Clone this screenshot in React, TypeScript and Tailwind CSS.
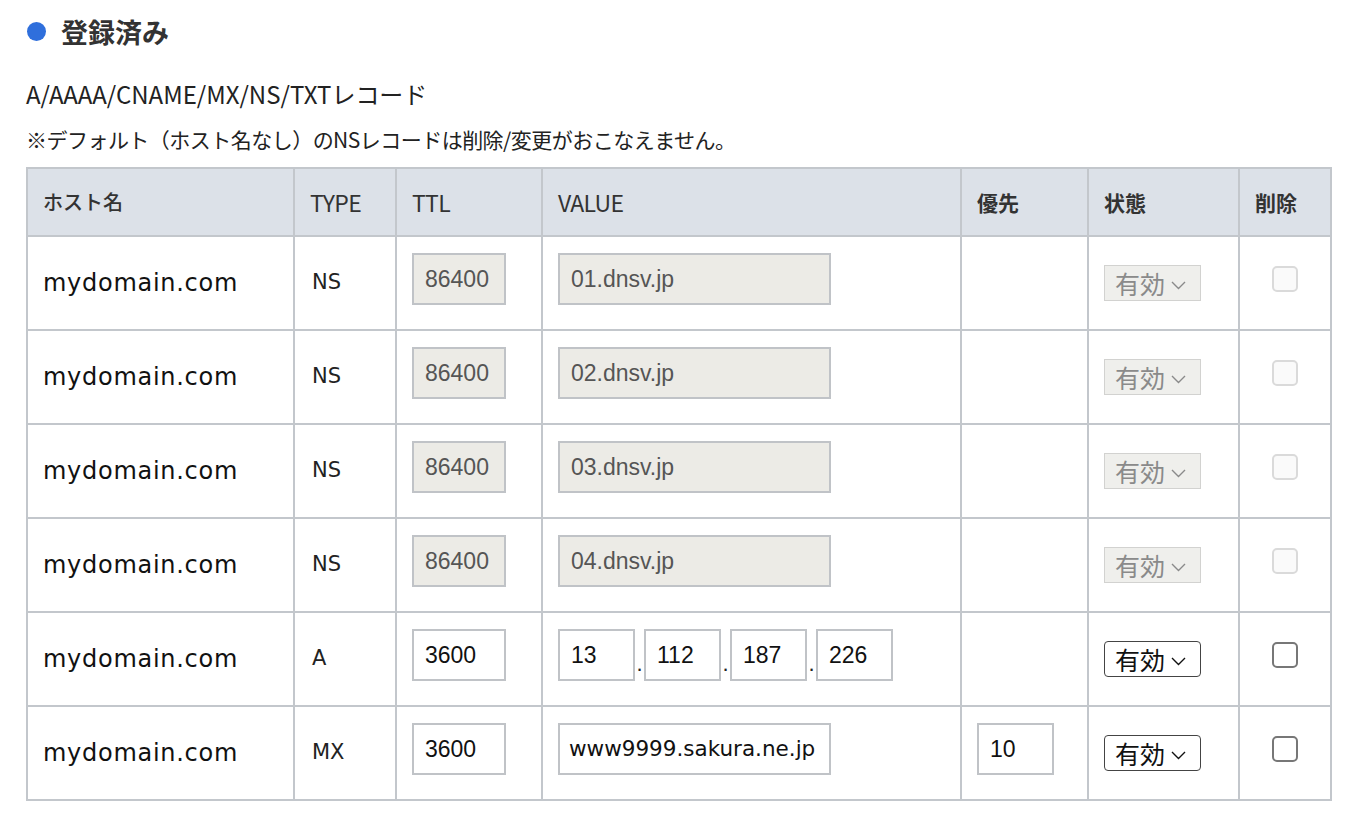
interface DnsRecord {
  host: string;
  type: string;
  ttl: string;
  value: string[];
  priority?: string;
  locked: boolean;
}

const records: DnsRecord[] = [
  { host: 'mydomain.com', type: 'NS', ttl: '86400', value: ['01.dnsv.jp'], locked: true },
  { host: 'mydomain.com', type: 'NS', ttl: '86400', value: ['02.dnsv.jp'], locked: true },
  { host: 'mydomain.com', type: 'NS', ttl: '86400', value: ['03.dnsv.jp'], locked: true },
  { host: 'mydomain.com', type: 'NS', ttl: '86400', value: ['04.dnsv.jp'], locked: true },
  { host: 'mydomain.com', type: 'A', ttl: '3600', value: ['13', '112', '187', '226'], locked: false },
  {
    host: 'mydomain.com',
    type: 'MX',
    ttl: '3600',
    value: ['www9999.sakura.ne.jp'],
    priority: '10',
    locked: false,
  },
];

const jp = "font-['Noto_Sans_CJK_JP',sans-serif]";
const verdana = "font-['DejaVu_Sans',sans-serif]";
const cell = 'border-2 border-[#c3c7cc] px-[15px] align-middle';

function TextBox({
  value,
  width,
  locked,
  wide = false,
}: {
  value: string;
  width: string;
  locked: boolean;
  wide?: boolean;
}) {
  return (
    <div
      className={`${width} h-[52px] mb-2 flex items-center border-2 border-[#c0c3c7] ${
        wide
          ? `${verdana} text-[21.5px] pl-[9px]`
          : "font-['Liberation_Sans',sans-serif] text-[23px] pl-[11px]"
      } ${locked ? 'bg-[#ecebe6] text-[#555]' : 'bg-white text-[#111]'}`}
    >
      {value}
    </div>
  );
}

function Chevron() {
  return (
    <svg width="15" height="9" viewBox="0 0 15 9" fill="none" className="mt-[4px]">
      <polyline points="1,1 7.5,7.5 14,1" stroke="currentColor" strokeWidth="1.4" />
    </svg>
  );
}

function StatusSelect({ locked }: { locked: boolean }) {
  return (
    <div
      className={`w-[97px] h-[36px] flex items-center pl-[10px] gap-[6px] ${jp} text-[25px] leading-none ${
        locked
          ? 'bg-[#efefec] border border-[#d2d2d0] text-[#8a8a8a]'
          : 'bg-white border border-[#444] rounded-[4px] text-[#111]'
      }`}
    >
      <span>有効</span>
      <Chevron />
    </div>
  );
}

function DeleteBox({ locked }: { locked: boolean }) {
  return (
    <div className="flex justify-center mb-2">
      <div
        className={`w-[26px] h-[26px] rounded-[5px] ${
          locked ? 'border-2 border-[#dadada] bg-[#fafafa]' : 'border-2 border-[#777] bg-white'
        }`}
      />
    </div>
  );
}

export default function App() {
  return (
    <div className={`min-h-screen bg-white pl-[26px] pt-[18px] ${jp} text-[#222]`}>
      <div className="flex items-center gap-[15px]">
        <span className="w-[19px] h-[19px] rounded-full bg-[#2f6fdc] ml-[1px]" />
        <h2 className="text-[27px] leading-none font-bold text-[#333]">登録済み</h2>
      </div>

      <p className="mt-[37px] text-[24px] leading-none text-[#222]">
        A/AAAA/CNAME/MX/NS/TXTレコード
      </p>
      <p className="mt-[23px] text-[21px] leading-none text-[#222] tracking-[-0.025em]">
        ※デフォルト（ホスト名なし）のNSレコードは削除/変更がおこなえません。
      </p>

      <table className="mt-[17px] w-[1304px] table-fixed border-collapse">
        <colgroup>
          <col className="w-[267px]" />
          <col className="w-[102px]" />
          <col className="w-[146px]" />
          <col className="w-[419px]" />
          <col className="w-[127px]" />
          <col className="w-[151px]" />
          <col className="w-[92px]" />
        </colgroup>
        <thead>
          <tr className="bg-[#dce1e8] h-[68px] text-left text-[#333] leading-none">
            <th className={`${cell} font-medium text-[20px]`}>ホスト名</th>
            <th className={`${cell} font-normal text-[23px] tracking-[-0.03em]`}>TYPE</th>
            <th className={`${cell} font-normal text-[23px] tracking-[-0.03em]`}>TTL</th>
            <th className={`${cell} font-normal text-[23px] tracking-[-0.03em]`}>VALUE</th>
            <th className={`${cell} font-bold text-[21px]`}>優先</th>
            <th className={`${cell} font-bold text-[21px]`}>状態</th>
            <th className={`${cell} font-bold text-[21px]`}>削除</th>
          </tr>
        </thead>
        <tbody>
          {records.map((r, i) => (
            <tr key={i} className="h-[94px]">
              <td className={`${cell} ${verdana} text-[24px] tracking-[0.03em] text-[#111]`}>
                {r.host}
              </td>
              <td className={`${cell} ${verdana} text-[21px] text-[#222]`}>
                <span className="pl-[2px]">{r.type}</span>
              </td>
              <td className={cell}>
                <TextBox value={r.ttl} width="w-[94px]" locked={r.locked} />
              </td>
              <td className={cell}>
                {r.value.length > 1 ? (
                  <div className="flex items-end">
                    {r.value.map((v, j) => (
                      <div key={j} className="flex items-end">
                        {j > 0 && (
                          <span className="w-[9px] mb-[14px] text-center font-['Liberation_Sans',sans-serif] text-[22px] leading-none">
                            .
                          </span>
                        )}
                        <TextBox value={v} width="w-[77px]" locked={false} />
                      </div>
                    ))}
                  </div>
                ) : (
                  <TextBox
                    value={r.value[0]}
                    width="w-[273px]"
                    locked={r.locked}
                    wide={r.type === 'MX'}
                  />
                )}
              </td>
              <td className={cell}>
                {r.priority && <TextBox value={r.priority} width="w-[77px]" locked={false} />}
              </td>
              <td className={cell}>
                <StatusSelect locked={r.locked} />
              </td>
              <td className={cell}>
                <DeleteBox locked={r.locked} />
              </td>
            </tr>
          ))}
        </tbody>
      </table>
    </div>
  );
}
